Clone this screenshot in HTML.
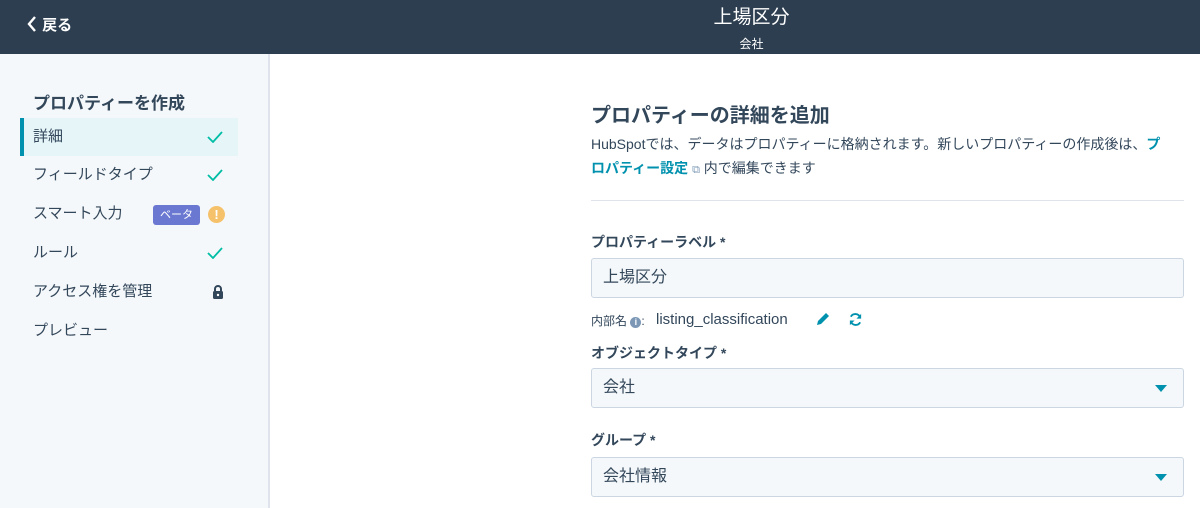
<!DOCTYPE html>
<html><head><meta charset="utf-8"><style>
*{box-sizing:border-box;margin:0;padding:0}
body{width:1200px;height:508px;overflow:hidden;font-family:"Liberation Sans","Noto Sans CJK JP",sans-serif;color:#33475b;background:#fff;position:relative}
.hdr{position:absolute;left:0;top:0;width:1200px;height:54px;background:#2d3e50;color:#fff}
.back{position:absolute;left:26px;top:14px;font-size:15px;font-weight:bold}
.ttl{position:absolute;left:0;width:1503px;text-align:center;top:2px;font-size:19px}
.sub{position:absolute;left:0;width:1503px;text-align:center;top:35px;font-size:12px}
.side{position:absolute;left:0;top:54px;width:270px;height:454px;background:#f5f8fa;border-right:2px solid #dfe3eb}
.sh{position:absolute;left:33px;top:35px;font-size:17px;font-weight:bold}
.it{position:absolute;left:20px;width:218px;height:38px;font-size:15px;line-height:38px;padding-left:13px;color:#33475b}
.act{background:#e5f5f8;border-left:4px solid #0091ae;padding-left:9px}
.ck{position:absolute;left:187px;top:13px}
.a{position:absolute;color:#33475b}
.lbl{position:absolute;left:591px;font-size:14px;font-weight:bold}
.inp{position:absolute;left:591px;width:593px;height:40px;background:#f5f8fa;border:1px solid #cbd6e2;border-radius:3px;font-size:16px;line-height:38px;padding-left:11px}
.car{position:absolute;right:16px;top:16px;width:0;height:0;border-left:6px solid transparent;border-right:6px solid transparent;border-top:7px solid #0091ae}
</style></head><body>
<div class="hdr">
<div class="back"><svg width="12" height="18" viewBox="0 0 12 18" style="vertical-align:-3px"><path d="M9 2L3 9l6 7" stroke="#fff" stroke-width="2.4" fill="none"/></svg> 戻る</div>
<div class="ttl">上場区分</div>
<div class="sub">会社</div>
</div>
<div class="side">
<div class="sh">プロパティーを作成</div>
<div class="it act" style="top:64px">詳細<svg class="ck" style="left:183px" width="16" height="12" viewBox="0 0 16 12"><path d="M1 6l5 5 9-10" stroke="#00bda5" stroke-width="1.8" fill="none"/></svg></div>
<div class="it" style="top:102px">フィールドタイプ<svg class="ck" width="16" height="12" viewBox="0 0 16 12"><path d="M1 6l5 5 9-10" stroke="#00bda5" stroke-width="1.8" fill="none"/></svg></div>
<div class="it" style="top:141px">スマート入力
<span style="position:absolute;left:133px;top:10px;width:47px;height:20px;background:#6a78d1;color:#fff;font-size:11px;line-height:20px;text-align:center;border-radius:3px">ベータ</span>
<span style="position:absolute;left:188px;top:11px;width:17px;height:17px;border-radius:50%;background:#f5c26b;color:#fff;font-size:13px;font-weight:bold;line-height:17px;text-align:center">!</span></div>
<div class="it" style="top:180px">ルール<svg class="ck" width="16" height="12" viewBox="0 0 16 12"><path d="M1 6l5 5 9-10" stroke="#00bda5" stroke-width="1.8" fill="none"/></svg></div>
<div class="it" style="top:219px">アクセス権を管理
<svg style="position:absolute;left:192px;top:12px" width="12" height="14" viewBox="0 0 12 14"><path d="M3 6V4a3 3 0 016 0v2" stroke="#33475b" stroke-width="2" fill="none"/><rect x="1" y="6" width="10" height="8" rx="1.5" fill="#33475b"/><circle cx="6" cy="10" r="1.2" fill="#fff"/></svg></div>
<div class="it" style="top:258px">プレビュー</div>
</div>
<div class="a" style="left:591px;top:99px;font-size:20px;font-weight:bold">プロパティーの詳細を追加</div>
<div class="a" style="left:591px;top:132px;font-size:14px;line-height:24px;width:600px">HubSpotでは、データはプロパティーに格納されます。新しいプロパティーの作成後は、<span style="color:#0091ae;font-weight:bold">プ<br>ロパティー設定</span> <span style="color:#7c98b6;font-size:11px">⧉</span> 内で編集できます</div>
<div style="position:absolute;left:591px;top:200px;width:593px;height:1px;background:#dfe3eb"></div>
<div class="lbl" style="top:232px">プロパティーラベル *</div>
<div class="inp" style="top:258px">上場区分</div>
<div class="a" style="left:591px;top:313px;font-size:12px;line-height:16px">内部名 <span style="display:inline-block;width:11px;height:11px;border-radius:50%;background:#7c98b6;color:#fff;font-size:9px;line-height:11px;text-align:center;font-weight:bold">i</span>:</div>
<div class="a" style="left:656px;top:311px;font-size:15px">listing_classification</div>
<svg style="position:absolute;left:815px;top:311px" width="16" height="16" viewBox="0 0 16 16"><path d="M2 14l1-4 8-8 3 3-8 8z" fill="#0091ae"/></svg>
<svg style="position:absolute;left:848px;top:312px" width="15" height="15" viewBox="0 0 16 16"><path d="M13 6A5.5 5.5 0 003 5M3 10a5.5 5.5 0 0010 1" stroke="#0091ae" stroke-width="2" fill="none"/><path d="M14 2v5h-5zM2 14V9h5z" fill="#0091ae"/></svg>
<div class="lbl" style="top:343px">オブジェクトタイプ *</div>
<div class="inp" style="top:368px">会社<div class="car"></div></div>
<div class="lbl" style="top:430px">グループ *</div>
<div class="inp" style="top:457px">会社情報<div class="car"></div></div>
</body></html>
